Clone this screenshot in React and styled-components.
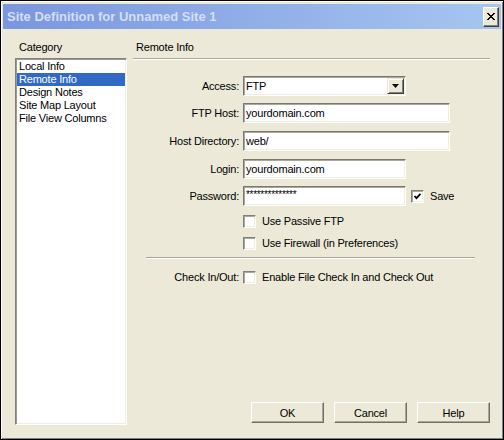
import React from 'react';
import styled, { createGlobalStyle } from 'styled-components';

const GlobalStyle = createGlobalStyle`
  html, body {
    margin: 0;
    padding: 0;
    background: #ECE9D8;
  }
  body {
    font-family: "Liberation Sans", Arial, sans-serif;
    font-size: 11px;
    letter-spacing: -0.2px;
    color: #000;
  }
`;

const Window = styled.div`
  width: 504px;
  height: 440px;
  box-sizing: border-box;
  display: flex;
  flex-direction: column;
  background: #ECE9D8;
  border: 1px solid #000;
  padding: 3px 2px 2px 2px;
  box-shadow: inset 1px 1px 0 #fff, inset -1px -1px 0 #808080;
`;

const TitleBar = styled.div`
  height: 25px;
  flex: none;
  display: flex;
  align-items: center;
  justify-content: space-between;
  padding: 0 2px 0 4px;
  background: linear-gradient(to right, #7A96DF, #A6C6F1);
`;

const Title = styled.span`
  font-family: "Liberation Sans", Arial, sans-serif;
  font-weight: bold;
  font-size: 13px;
  letter-spacing: 0;
  color: #D3DEF6;
`;

const CloseButton = styled.div`
  width: 16px;
  height: 20px;
  box-sizing: border-box;
  display: flex;
  align-items: center;
  justify-content: center;
  background: #ECE9D8;
  border: 1px solid;
  border-color: #fff #404040 #404040 #fff;
  box-shadow: inset -1px -1px 0 #808080;
`;

const Body = styled.div`
  flex: 1;
  display: flex;
  gap: 6px;
  padding: 11px 11px 12px 12px;
  min-height: 0;
`;

const LeftColumn = styled.div`
  width: 112px;
  display: flex;
  flex-direction: column;
`;

const RightColumn = styled.div`
  flex: 1;
  display: flex;
  flex-direction: column;
`;

const Heading = styled.div`
  line-height: 14px;
  padding-left: ${(p) => p.$indent}px;
  margin-bottom: 4px;
`;

const ListBox = styled.div`
  flex: 1;
  box-sizing: border-box;
  background: #fff;
  border: 1px solid;
  border-color: #808080 #fff #fff #808080;
  box-shadow: inset 1px 1px 0 #9D9A8C, inset -1px -1px 0 #F1EFE2;
  padding: 1px;
`;

const ListItem = styled.div`
  height: 13px;
  line-height: 13px;
  padding-left: 2px;
  background: ${(p) => (p.$selected ? '#316AC5' : 'transparent')};
  color: ${(p) => (p.$selected ? '#fff' : '#000')};
  white-space: nowrap;
`;

const Separator = styled.div`
  height: 0;
  border-top: 1px solid #ACA899;
  border-bottom: 1px solid #fff;
  margin: ${(p) => p.$margin || '0'};
`;

const Form = styled.div`
  display: flex;
  flex-direction: column;
  margin-top: 16px;
`;

const Row = styled.div`
  display: flex;
  align-items: center;
  height: 20px;
  margin-top: ${(p) => p.$mt || 0}px;
`;

const Label = styled.div`
  width: 106px;
  flex: none;
  text-align: right;
  margin-right: 4px;
  white-space: nowrap;
`;

const TextBox = styled.div`
  width: ${(p) => p.$w}px;
  height: 20px;
  box-sizing: border-box;
  display: flex;
  align-items: center;
  background: #fff;
  border: 1px solid;
  border-color: #7A7869 #fff #fff #7A7869;
  box-shadow: inset 1px 1px 0 #ACA899, inset -1px -1px 0 #F1EFE2;
  padding: 0 2px 0 2px;
  white-space: nowrap;
  overflow: hidden;
`;

const Mask = styled.span`
  font-size: 10px;
  letter-spacing: -0.3px;
  position: relative;
  top: -2px;
`;

const SelectText = styled.span`
  flex: 1;
`;

const DropButton = styled.div`
  width: 17px;
  height: 16px;
  box-sizing: border-box;
  margin-right: -1px;
  display: flex;
  align-items: center;
  justify-content: center;
  background: #ECE9D8;
  border: 1px solid;
  border-color: #ECE9D8 #404040 #404040 #ECE9D8;
  box-shadow: inset 1px 1px 0 #fff, inset -1px -1px 0 #808080;
`;

const CheckBox = styled.div`
  width: 13px;
  height: 13px;
  box-sizing: border-box;
  flex: none;
  display: flex;
  align-items: center;
  justify-content: center;
  background: #fff;
  border: 1px solid;
  border-color: #808080 #fff #fff #808080;
  box-shadow: inset 1px 1px 0 #ACA899, inset -1px -1px 0 #F1EFE2;
  margin-left: ${(p) => p.$ml || 0}px;
`;

const CheckText = styled.span`
  margin-left: 6px;
  white-space: nowrap;
`;

const ButtonRow = styled.div`
  margin-top: auto;
  margin-bottom: 2px;
  display: flex;
  justify-content: flex-end;
  gap: 10px;
`;

const Button = styled.div`
  width: 73px;
  height: 21px;
  box-sizing: border-box;
  display: flex;
  align-items: center;
  justify-content: center;
  background: #ECE9D8;
  border: 1px solid;
  border-color: #fff #716F64 #716F64 #fff;
  box-shadow: inset -1px -1px 0 #ACA899;
`;

const CloseIcon = () => (
  <svg width="8" height="7" viewBox="0 0 8 7">
    <path d="M0 0h2v1h1v1h2V1h1V0h2v1H7v1H6v1H5v1h1v1h1v1h1v1H6V6H5V5H3v1H2v1H0V6h1V5h1V4h1V3H2V2H1V1H0z" fill="#000" />
  </svg>
);

const Arrow = () => (
  <svg width="7" height="4" viewBox="0 0 7 4">
    <path d="M0 0h7L3.5 4z" fill="#000" />
  </svg>
);

const Tick = () => (
  <svg width="9" height="9" viewBox="0 0 9 9">
    <path d="M1.5 4 L3.5 6.2 L7.5 1.8" stroke="#000" strokeWidth="1.8" fill="none" />
  </svg>
);

const categories = ['Local Info', 'Remote Info', 'Design Notes', 'Site Map Layout', 'File View Columns'];

export default function App() {
  return (
    <>
      <GlobalStyle />
      <Window>
        <TitleBar>
          <Title>Site Definition for Unnamed Site 1</Title>
          <CloseButton>
            <CloseIcon />
          </CloseButton>
        </TitleBar>
        <Body>
          <LeftColumn>
            <Heading $indent={4}>Category</Heading>
            <ListBox>
              {categories.map((c) => (
                <ListItem key={c} $selected={c === 'Remote Info'}>{c}</ListItem>
              ))}
            </ListBox>
          </LeftColumn>
          <RightColumn>
            <Heading $indent={3}>Remote Info</Heading>
            <Separator />
            <Form>
              <Row>
                <Label>Access:</Label>
                <TextBox $w={163}>
                  <SelectText>FTP</SelectText>
                  <DropButton><Arrow /></DropButton>
                </TextBox>
              </Row>
              <Row $mt={7}>
                <Label>FTP Host:</Label>
                <TextBox $w={207}>yourdomain.com</TextBox>
              </Row>
              <Row $mt={8}>
                <Label>Host Directory:</Label>
                <TextBox $w={207}>web/</TextBox>
              </Row>
              <Row $mt={8}>
                <Label>Login:</Label>
                <TextBox $w={163}>yourdomain.com</TextBox>
              </Row>
              <Row $mt={7}>
                <Label>Password:</Label>
                <TextBox $w={163}><Mask>**************</Mask></TextBox>
                <CheckBox $ml={5}><Tick /></CheckBox>
                <CheckText>Save</CheckText>
              </Row>
              <Row $mt={5}>
                <Label />
                <CheckBox />
                <CheckText>Use Passive FTP</CheckText>
              </Row>
              <Row $mt={2}>
                <Label />
                <CheckBox />
                <CheckText>Use Firewall (in Preferences)</CheckText>
              </Row>
              <Separator $margin="4px 15px 0 13px" />
              <Row $mt={8}>
                <Label>Check In/Out:</Label>
                <CheckBox />
                <CheckText>Enable File Check In and Check Out</CheckText>
              </Row>
            </Form>
            <ButtonRow>
              <Button>OK</Button>
              <Button>Cancel</Button>
              <Button>Help</Button>
            </ButtonRow>
          </RightColumn>
        </Body>
      </Window>
    </>
  );
}
